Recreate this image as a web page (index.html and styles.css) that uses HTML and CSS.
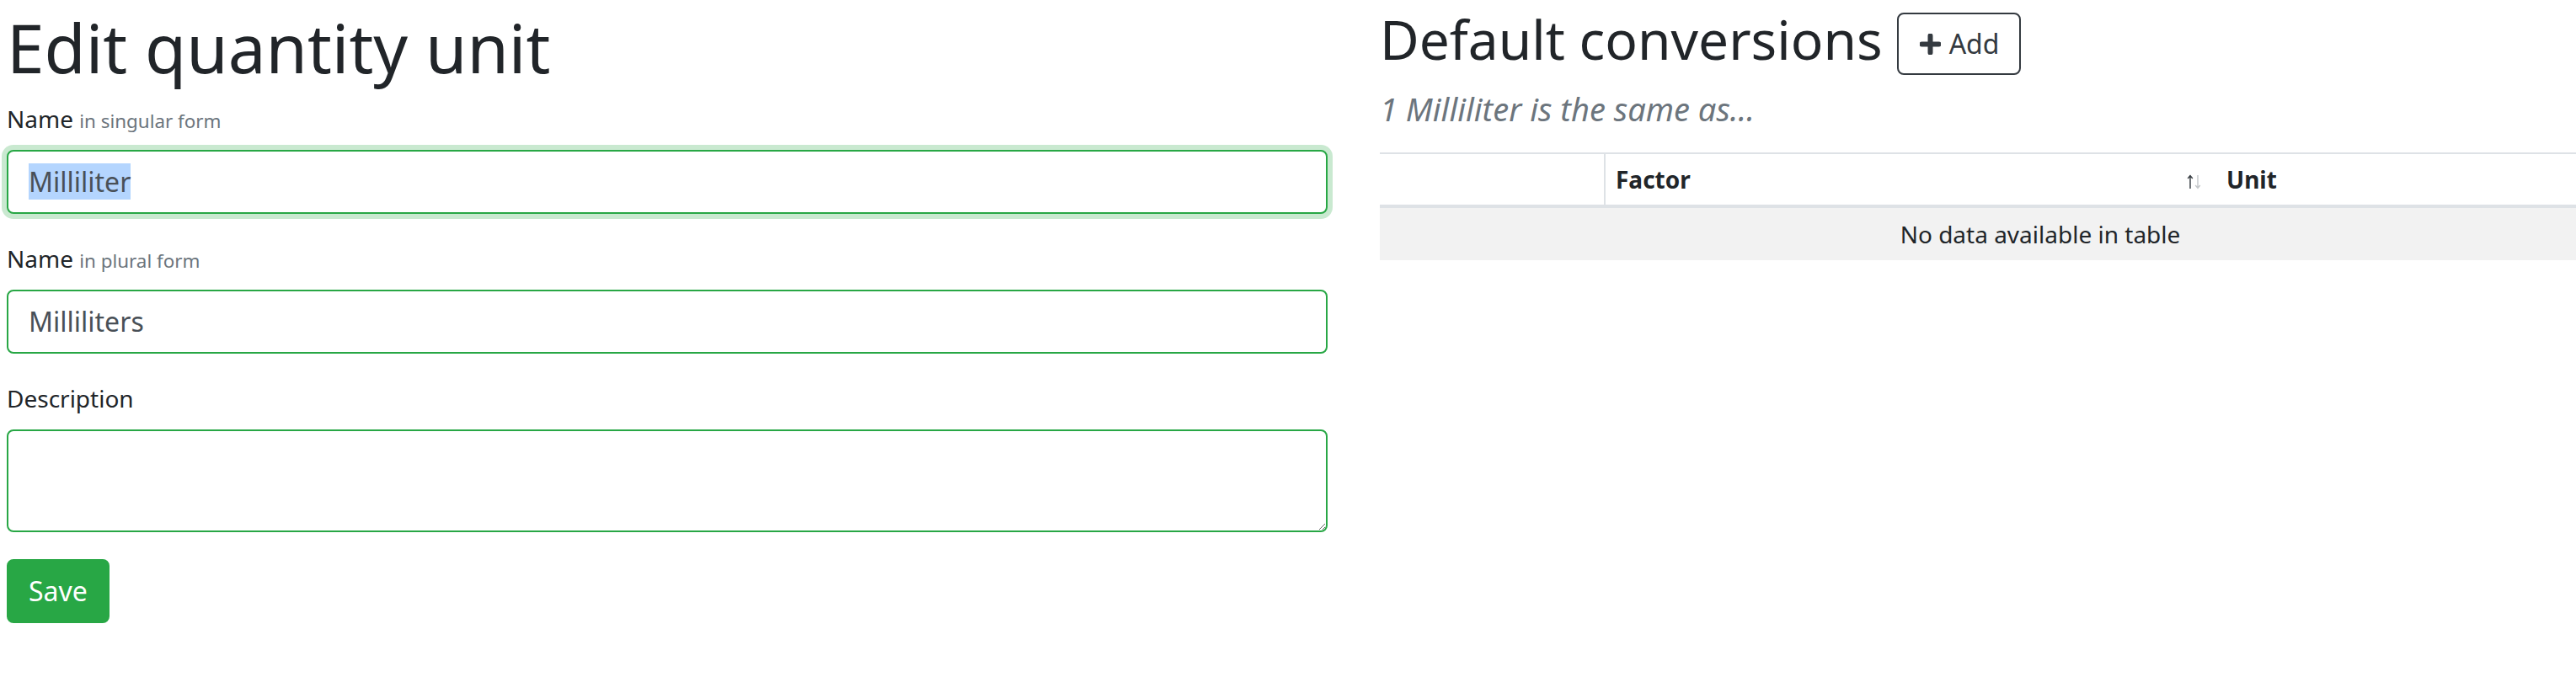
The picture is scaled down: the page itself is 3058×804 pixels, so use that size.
FILE: index.html
```html
<!DOCTYPE html>
<html lang="en">
<head>
<meta charset="utf-8">
<title>Edit quantity unit</title>
<link rel="stylesheet" href="styles.css">
</head>
<body>
<div class="page">
  <section class="col">
    <h2 class="title">Edit quantity unit</h2>
    <div class="group">
      <label class="label">Name <span class="hint">in singular form</span></label>
      <div class="control focused"><span class="sel">Milliliter</span></div>
    </div>
    <div class="group">
      <label class="label">Name <span class="hint">in plural form</span></label>
      <div class="control">Milliliters</div>
    </div>
    <div class="group">
      <label class="label">Description</label>
      <textarea class="control area"></textarea>
    </div>
    <button class="btn-save" type="button">Save</button>
  </section>
  <section class="col">
    <div class="head">
      <h2 class="head-title">Default conversions</h2>
      <a class="btn-add">
        <svg class="plus" width="25" height="25" viewBox="0 0 25 25"><path d="M12.5 2.5v20M2.5 12.5h20" stroke="#343a40" stroke-width="6" stroke-linecap="round" fill="none"/></svg>
        <span>Add</span>
      </a>
    </div>
    <h4 class="sub">1 Milliliter is the same as...</h4>
    <table class="tbl">
      <colgroup><col class="c1"><col class="c2"><col class="c3"></colgroup>
      <thead>
        <tr>
          <th class="th-first"></th>
          <th><div class="th-sort"><span>Factor</span>
            <svg class="arrows" width="18" height="18" viewBox="0 0 18 18">
              <path d="M4 17V1.5M1.2 5L4 1.5L6.8 5" stroke="#343a40" stroke-width="1.4" fill="none"/>
              <path d="M13 1v15.5M10.2 13L13 16.5L15.8 13" stroke="#c4c7ca" stroke-width="1.4" fill="none"/>
            </svg></div></th>
          <th>Unit</th>
        </tr>
      </thead>
      <tbody>
        <tr><td class="empty" colspan="3">No data available in table</td></tr>
      </tbody>
    </table>
  </section>
</div>
</body>
</html>
```

FILE: styles.css
```css
html, body {
  margin: 0;
  padding: 0;
  overflow: hidden;
  background: #fff;
}
body {
  font-family: "Noto Sans", "Open Sans", sans-serif;
  color: #212529;
  font-size: 28px;
  line-height: 42px;
}
.page {
  display: grid;
  grid-template-columns: 1568px 1568px;
  column-gap: 62px;
  padding: 8px;
  width: 3300px;
  box-sizing: border-box;
}
.title {
  font-size: 80px;
  line-height: 96px;
  font-weight: 400;
  margin: 0 0 16px;
}
.group {
  margin-bottom: 32px;
}
.label {
  display: block;
  font-size: 28px;
  line-height: 42px;
  margin-bottom: 16px;
}
.hint {
  font-size: 22.4px;
  line-height: 1;
  color: #6c757d;
}
.control {
  display: block;
  width: 100%;
  height: 76px;
  box-sizing: border-box;
  border: 2px solid #28a745;
  border-radius: 8px;
  padding: 12px 24px;
  font-family: inherit;
  font-size: 32px;
  line-height: 48px;
  color: #495057;
  background: #fff;
  margin: 0;
}
.focused {
  box-shadow: 0 0 0 6px rgba(40, 167, 69, 0.25);
}
.sel {
  background: #b4d5fe;
}
.area {
  height: 122px;
  resize: both;
  outline: none;
}
.btn-save {
  display: block;
  font-family: inherit;
  font-size: 32px;
  line-height: 48px;
  padding: 12px 24px;
  border: 2px solid #28a745;
  border-radius: 8px;
  background: #28a745;
  color: #fff;
  margin: 0;
}
.head {
  display: flex;
  align-items: flex-start;
  gap: 17px;
}
.head-title {
  font-size: 64px;
  line-height: 77px;
  font-weight: 400;
  margin: 0;
}
.btn-add {
  margin-top: 7px;
  height: 74px;
  box-sizing: border-box;
  border: 2px solid #343a40;
  border-radius: 8px;
  padding: 0 24px 0 25px;
  display: flex;
  align-items: center;
  gap: 10px;
  font-size: 32px;
  line-height: 48px;
  color: #343a40;
}
.plus {
  display: block;
}
.sub {
  font-size: 38px;
  line-height: 46px;
  font-style: italic;
  font-weight: 400;
  color: #6c757d;
  margin: 17px 0 29px;
}
.tbl {
  width: 100%;
  border-collapse: collapse;
  table-layout: fixed;
  font-size: 28px;
  line-height: 42px;
}
.c1 { width: 267px; }
.c2 { width: 726px; }
.tbl th {
  text-align: left;
  font-weight: 700;
  padding: 9px 12px;
  border-top: 2px solid #dee2e6;
  border-bottom: 4px solid #dee2e6;
}
.tbl .th-first {
  border-right: 2px solid #dee2e6;
}
.th-sort {
  display: flex;
  align-items: center;
  justify-content: space-between;
}
.arrows {
  display: block;
  margin-right: 5px;
  margin-top: 6px;
}
.tbl td.empty {
  background: #f2f2f2;
  text-align: center;
  padding: 10px;
}
```
